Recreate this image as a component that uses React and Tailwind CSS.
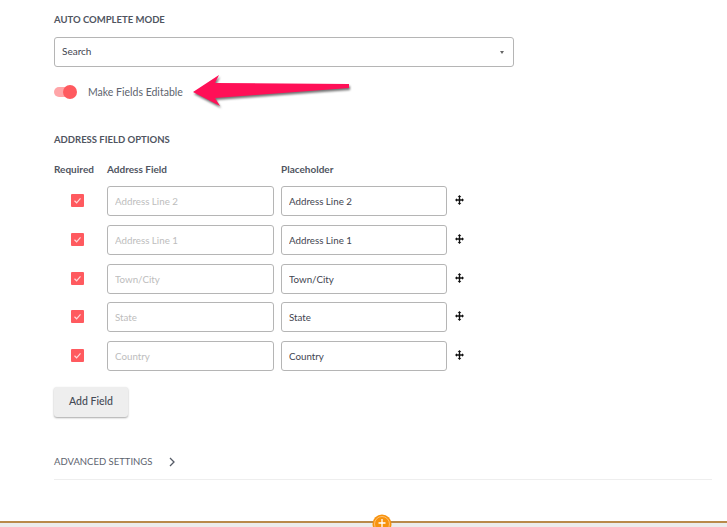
const rows = [
  ["Address Line 2", "Address Line 2"],
  ["Address Line 1", "Address Line 1"],
  ["Town/City", "Town/City"],
  ["State", "State"],
  ["Country", "Country"],
];

function MoveIcon() {
  return (
    <svg width="9" height="10" viewBox="0 0 9 10" className="block">
      <path d="M4.5 0 L6.3 2 L5.2 2 L5.2 4.3 L7 4.3 L7 3.2 L9 5 L7 6.8 L7 5.7 L5.2 5.7 L5.2 8 L6.3 8 L4.5 10 L2.7 8 L3.8 8 L3.8 5.7 L2 5.7 L2 6.8 L0 5 L2 3.2 L2 4.3 L3.8 4.3 L3.8 2 L2.7 2 Z" fill="#111" />
    </svg>
  );
}

function Check() {
  return (
    <span className="flex h-[13px] w-[13px] items-center justify-center rounded-[1px] bg-[#ff5a5f]">
      <svg width="9" height="9" viewBox="0 0 9 9" fill="none">
        <path d="M1.5 4.8 L3.6 6.8 L7.5 2.4" stroke="#ffd9da" strokeWidth="1.2" />
      </svg>
    </span>
  );
}

export default function App() {
  return (
    <div className="relative h-[527px] w-[727px] overflow-hidden bg-white font-['Lato',sans-serif] text-[10px] text-[#555b66]">
      <div className="pl-[54px] pr-[15px] pt-[13px]">
        <h2 className="text-[9.5px] leading-[13px] font-bold text-[#50555f]">AUTO COMPLETE MODE</h2>
        <div className="mt-[11px] flex h-[30px] w-[460px] items-center justify-between rounded-[3px] border border-[#b5b5b5] pl-[7px] pr-[9px] text-[#3f4550]">
          <span className="pb-[1px]">Search</span>
          <span className="h-0 w-0 border-x-[2.5px] border-t-[3px] border-x-transparent border-t-[#666]" />
        </div>

        <div className="mt-[18px] flex h-[14px] items-center">
          <span className="relative block h-[10px] w-[23px]">
            <span className="absolute left-0 top-0 h-[10px] w-[22px] rounded-full bg-[#ffa5a8]" />
            <span className="absolute left-[9px] top-[-2px] h-[14px] w-[14px] rounded-full bg-[#ff5a5f]" />
          </span>
          <span className="ml-[11px] pt-[1px] text-[10.5px] text-[#5d636e]">Make Fields Editable</span>
        </div>

        <h2 className="mt-[34px] text-[9.5px] leading-[13px] font-bold text-[#50555f]">ADDRESS FIELD OPTIONS</h2>

        <div className="mt-[17px] flex h-[13px] items-center text-[10px] font-bold text-[#50555f]">
          <span className="w-[53px]">Required</span>
          <span className="w-[174px]">Address Field</span>
          <span>Placeholder</span>
        </div>

        <div className="mt-[10px] flex flex-col gap-[8.75px]">
          {rows.map(([ph, val]) => (
            <div key={ph} className="flex h-[30px] items-center">
              <span className="flex w-[53px] pl-[17px] pb-[1px]"><Check /></span>
              <input
                readOnly
                placeholder={ph}
                className="h-[30px] w-[167px] rounded-[3px] border border-[#b5b5b5] px-[7px] text-[9.75px] outline-none placeholder:text-[#bdbdbd]"
              />
              <input
                readOnly
                defaultValue={val}
                className="ml-[7px] h-[30px] w-[166px] rounded-[3px] border border-[#b5b5b5] px-[7px] text-[9.75px] text-[#3f4550] outline-none"
              />
              <span className="ml-[8px] pb-[2px]"><MoveIcon /></span>
            </div>
          ))}
        </div>

        <button className="mt-[16px] block h-[30px] w-[74px] rounded-[3px] bg-[#eeeeee] text-[10.5px] font-medium text-[#444a55] shadow-[0_1px_2px_rgba(0,0,0,0.35)]">
          Add Field
        </button>

        <div className="mt-[38px] flex h-[14px] items-center">
          <span className="text-[9.5px] text-[#5d636e]">ADVANCED SETTINGS</span>
          <svg width="8" height="10" viewBox="0 0 8 10" fill="none" className="ml-[16px]">
            <path d="M2 1 L6 5 L2 9" stroke="#555b66" strokeWidth="1.3" />
          </svg>
        </div>
        <div className="mt-[10px] h-px bg-[#eeeeee]" />
      </div>

      <svg width="170" height="50" viewBox="0 0 170 50" className="absolute left-[185px] top-[70px] drop-shadow-[1px_2px_1px_rgba(0,0,0,0.55)]">
        <path d="M8 22 L34 5 L30 13 L164 14 L164 18 L30 28 L35 36 Z" fill="#ff1057" />
      </svg>

      <div className="absolute bottom-0 left-0 right-0 h-[6px] border-t-2 border-[#b98a4a] bg-[#ececec]" />
      <svg width="20" height="20" viewBox="0 0 20 20" className="absolute left-[372px] top-[514px]">
        <circle cx="10" cy="10" r="9.5" fill="#f7930e" />
        <circle cx="10" cy="10" r="7.5" fill="none" stroke="#ffc98a" strokeWidth="0.8" />
        <path d="M10 5 V14 M6.5 9 H13.5" stroke="#fff" strokeWidth="1.3" />
      </svg>
    </div>
  );
}
